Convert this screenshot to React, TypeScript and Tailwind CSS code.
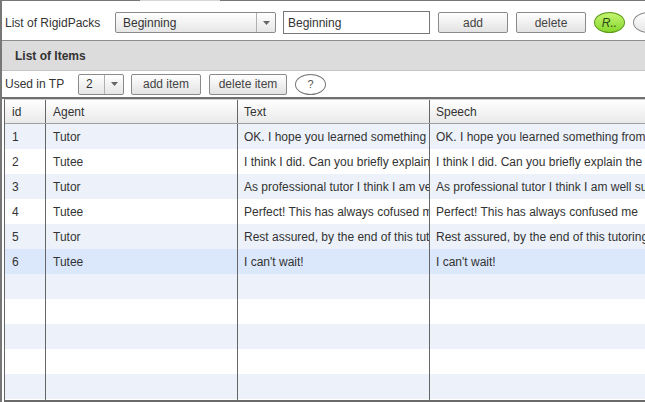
import React from "react";

type Row = { id: number; agent: string; text: string; speech: string };

const rows: Row[] = [
  {
    id: 1,
    agent: "Tutor",
    text: "OK. I hope you learned something from this lesson",
    speech: "OK. I hope you learned something from this lesson",
  },
  {
    id: 2,
    agent: "Tutee",
    text: "I think I did. Can you briefly explain the main points again?",
    speech: "I think I did. Can you briefly explain the main points again?",
  },
  {
    id: 3,
    agent: "Tutor",
    text: "As professional tutor I think I am very good at that",
    speech: "As professional tutor I think I am well suited for that",
  },
  {
    id: 4,
    agent: "Tutee",
    text: "Perfect! This has always cofused me",
    speech: "Perfect! This has always confused me",
  },
  {
    id: 5,
    agent: "Tutor",
    text: "Rest assured, by the end of this tutoring session you will know",
    speech: "Rest assured, by the end of this tutoring session you will know",
  },
  { id: 6, agent: "Tutee", text: "I can't wait!", speech: "I can't wait!" },
];

const font = { fontFamily: '"Liberation Sans", Arial, sans-serif' };

const Btn = ({ label, w }: { label: string; w: string }) => (
  <button
    className={`${w} shrink-0 h-[21px] border border-[#8a8a8a] rounded-[2px] bg-gradient-to-b from-white to-[#e2e2e2] text-[12px] text-[#444] leading-none`}
  >
    {label}
  </button>
);

const Select = ({ value, w }: { value: string; w: string }) => (
  <div
    className={`${w} shrink-0 h-[21px] flex border border-[#8a8a8a] rounded-[2px] bg-gradient-to-b from-white to-[#e6e6e6]`}
  >
    <div className="flex-1 flex items-center pl-[7px] text-[12px] text-[#333]">
      {value}
    </div>
    <div className="w-[19px] border-l border-[#b0b0b0] flex items-center justify-center">
      <svg width="7" height="4" viewBox="0 0 7 4">
        <path d="M0 0h7L3.5 4z" fill="#666" />
      </svg>
    </div>
  </div>
);

const Cell = ({ w, children, pl }: { w?: string; children?: React.ReactNode; pl: string }) => (
  <div
    className={`${w ? `${w} shrink-0 border-r border-[#666]` : "flex-1 min-w-0"} ${pl} flex items-center overflow-hidden whitespace-nowrap`}
  >
    <span>{children}</span>
  </div>
);

export default function App() {
  const empty = [0, 1, 2, 3, 4];
  return (
    <div
      className="w-[645px] h-[402px] overflow-hidden bg-white flex flex-col border-l-2 border-[#777]"
      style={font}
    >
      {/* top edge */}
      <div className="h-px flex shrink-0">
        <div className="w-[138px] bg-[#777]" />
        <div className="w-[80px] bg-[#d6d6d6]" />
        <div className="flex-1 bg-[#777]" />
      </div>

      {/* RigidPacks row */}
      <div className="h-[39px] shrink-0 flex items-center pl-[3px] pt-[4px]">
        <span className="text-[12px] text-[#333] w-[110px] shrink-0">List of RigidPacks</span>
        <Select value="Beginning" w="w-[161px]" />
        <input
          className="ml-[7px] shrink-0 w-[147px] h-[23px] border border-[#777] px-[4px] text-[12px] text-[#333] outline-none"
          defaultValue="Beginning"
        />
        <div className="ml-[8px] flex gap-[8px] items-center shrink-0">
          <Btn label="add" w="w-[70px]" />
          <Btn label="delete" w="w-[70px]" />
          <div className="w-[31px] h-[21px] shrink-0 rounded-[50%] border border-[#5d9a1c] bg-gradient-to-b from-[#c4f56e] to-[#86d629] flex items-center justify-center text-[12px] italic text-[#2d4a10]">
            R..
          </div>
          <div className="w-[31px] h-[21px] shrink-0 rounded-[50%] border border-[#888] bg-gradient-to-b from-white to-[#e6e6e6]" />
        </div>
      </div>

      {/* panel header */}
      <div className="h-[31px] shrink-0 bg-[#dcdcdc] border-t border-[#8c8c8c] border-b border-b-[#c4c4c4] flex items-center pl-[13px]">
        <span className="text-[12px] font-bold text-[#333]">List of Items</span>
      </div>

      {/* Used in TP row */}
      <div className="h-[28px] shrink-0 flex items-center pl-[3px] border-b-2 border-[#6f6f6f]">
        <span className="text-[12px] text-[#333] w-[73px] shrink-0">Used in TP</span>
        <Select value="2" w="w-[46px]" />
        <div className="ml-[7px] flex gap-[8px] items-center shrink-0">
          <Btn label="add item" w="w-[70px]" />
          <Btn label="delete item" w="w-[78px]" />
          <div className="w-[31px] h-[21px] shrink-0 rounded-[50%] border border-[#777] bg-white flex items-center justify-center text-[11px] text-[#555]">
            ?
          </div>
        </div>
      </div>

      {/* table */}
      <div className="flex-1 ml-[2px] border-l border-[#666] border-b-2 border-b-[#6a6a6a] border-t border-t-[#cfcfcf] flex flex-col text-[12px] text-[#333]">
        <div className="h-[24px] shrink-0 flex bg-gradient-to-b from-white to-[#e9e9e9] border-b border-[#a0a0a0]">
          <Cell w="w-[41px]" pl="pl-[7px]">id</Cell>
          <Cell w="w-[192px]" pl="pl-[7px]">Agent</Cell>
          <Cell w="w-[192px]" pl="pl-[6px]">Text</Cell>
          <Cell pl="pl-[6px]">Speech</Cell>
        </div>
        {rows.map((r, i) => (
          <div
            key={r.id}
            className={`h-[25px] shrink-0 flex ${
              r.id === 6 ? "bg-[#dbe7fb]" : i % 2 === 0 ? "bg-[#edf2fa]" : "bg-white"
            }`}
          >
            <Cell w="w-[41px]" pl="pl-[7px]">{r.id}</Cell>
            <Cell w="w-[192px]" pl="pl-[7px]">{r.agent}</Cell>
            <Cell w="w-[192px]" pl="pl-[6px]">{r.text}</Cell>
            <Cell pl="pl-[6px]">{r.speech}</Cell>
          </div>
        ))}
        {empty.map((e) => (
          <div key={e} className={`h-[25px] shrink-0 flex ${e % 2 === 0 ? "bg-[#edf2fa]" : "bg-white"}`}>
            <Cell w="w-[41px]" pl="pl-[7px]" />
            <Cell w="w-[192px]" pl="pl-[7px]" />
            <Cell w="w-[192px]" pl="pl-[6px]" />
            <Cell pl="pl-[6px]" />
          </div>
        ))}
        <div className="flex-1 flex">
          <Cell w="w-[41px]" pl="pl-[7px]" />
          <Cell w="w-[192px]" pl="pl-[7px]" />
          <Cell w="w-[192px]" pl="pl-[6px]" />
          <Cell pl="pl-[6px]" />
        </div>
      </div>
    </div>
  );
}
